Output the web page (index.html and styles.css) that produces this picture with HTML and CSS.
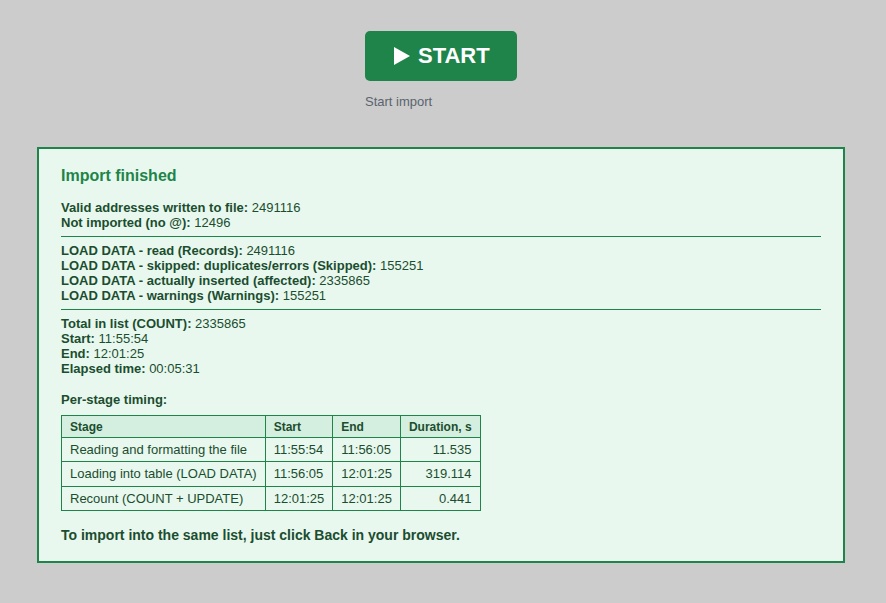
FILE: index.html
```html
<!DOCTYPE html>
<html lang="en">
<head>
<meta charset="utf-8">
<title>Import</title>
<link rel="stylesheet" href="styles.css">
</head>
<body>
  <div class="launch">
    <button class="start-btn" type="button">
      <svg class="play" width="16" height="18" viewBox="0 0 16 18" aria-hidden="true"><path d="M0 0 L16 9 L0 18 Z" fill="#fff"/></svg>
      <span>START</span>
    </button>
    <div class="caption">Start import</div>
  </div>

  <section class="result">
    <h3 class="result-title">Import finished</h3>

    <div class="info">
      <div><b>Valid addresses written to file:</b> 2491116</div>
      <div><b>Not imported (no @):</b> 12496</div>
    </div>
    <hr class="sep">
    <div class="info">
      <div><b>LOAD DATA - read (Records):</b> 2491116</div>
      <div><b>LOAD DATA - skipped: duplicates/errors (Skipped):</b> 155251</div>
      <div><b>LOAD DATA - actually inserted (affected):</b> 2335865</div>
      <div><b>LOAD DATA - warnings (Warnings):</b> 155251</div>
    </div>
    <hr class="sep">
    <div class="info">
      <div><b>Total in list (COUNT):</b> 2335865</div>
      <div><b>Start:</b> 11:55:54</div>
      <div><b>End:</b> 12:01:25</div>
      <div><b>Elapsed time:</b> 00:05:31</div>
    </div>

    <h4 class="timing-title">Per-stage timing:</h4>
    <table class="timing">
      <thead>
        <tr><th>Stage</th><th>Start</th><th>End</th><th class="num">Duration, s</th></tr>
      </thead>
      <tbody>
        <tr><td>Reading and formatting the file</td><td>11:55:54</td><td>11:56:05</td><td class="num">11.535</td></tr>
        <tr><td>Loading into table (LOAD DATA)</td><td>11:56:05</td><td>12:01:25</td><td class="num">319.114</td></tr>
        <tr><td>Recount (COUNT + UPDATE)</td><td>12:01:25</td><td>12:01:25</td><td class="num">0.441</td></tr>
      </tbody>
    </table>

    <p class="hint">To import into the same list, just click Back in your browser.</p>
  </section>
</body>
</html>
```

FILE: styles.css
```css
html, body {
  margin: 0;
  padding: 0;
}

body {
  background: #cccccc;
  font-family: "Liberation Sans", Arial, sans-serif;
  padding: 31px 4px 0 0;
  min-height: 603px;
  box-sizing: border-box;
}

.launch {
  display: flex;
  flex-direction: column;
  align-items: flex-start;
  width: 152px;
  margin: 0 auto;
}

.start-btn {
  display: flex;
  align-items: center;
  gap: 8px;
  width: 152px;
  height: 50px;
  padding: 0 0 0 29px;
  border: none;
  border-radius: 5px;
  background: #1e8449;
  color: #ffffff;
  font-family: "Liberation Sans", Arial, sans-serif;
  font-weight: bold;
  font-size: 22px;
  cursor: pointer;
}

.play {
  display: block;
  flex: none;
}

.caption {
  margin-top: 13px;
  font-size: 13px;
  line-height: 15px;
  color: #5a6470;
}

.result {
  width: 760px;
  margin: 38px auto 0;
  padding: 17px 22px 17px;
  background: #e8f8ef;
  border: 2px solid #1e8449;
  color: #1b4d2e;
}

.result-title {
  margin: 0 0 14px;
  font-size: 16px;
  line-height: 20px;
  color: #1e8449;
}

.info {
  font-size: 13px;
  line-height: 15px;
}

.sep {
  margin: 6px 0 6px;
  border: none;
  border-top: 1px solid #1e8449;
  height: 0;
}

.timing-title {
  margin: 16px 0 7px;
  font-size: 13px;
  line-height: 16px;
}

.timing {
  border-collapse: collapse;
  font-size: 13px;
  color: #1b4d2e;
}

.timing th,
.timing td {
  border: 1px solid #1e8449;
  padding: 4px 8px;
  text-align: left;
  line-height: 15.3px;
  white-space: nowrap;
}

.timing th {
  background: #d4efdf;
  font-size: 12px;
  line-height: 12px;
  padding: 5px 8px 4px;
}

.timing .num {
  text-align: right;
}

.hint {
  margin: 15px 0 0;
  font-size: 14px;
  line-height: 18px;
  font-weight: bold;
}
```
